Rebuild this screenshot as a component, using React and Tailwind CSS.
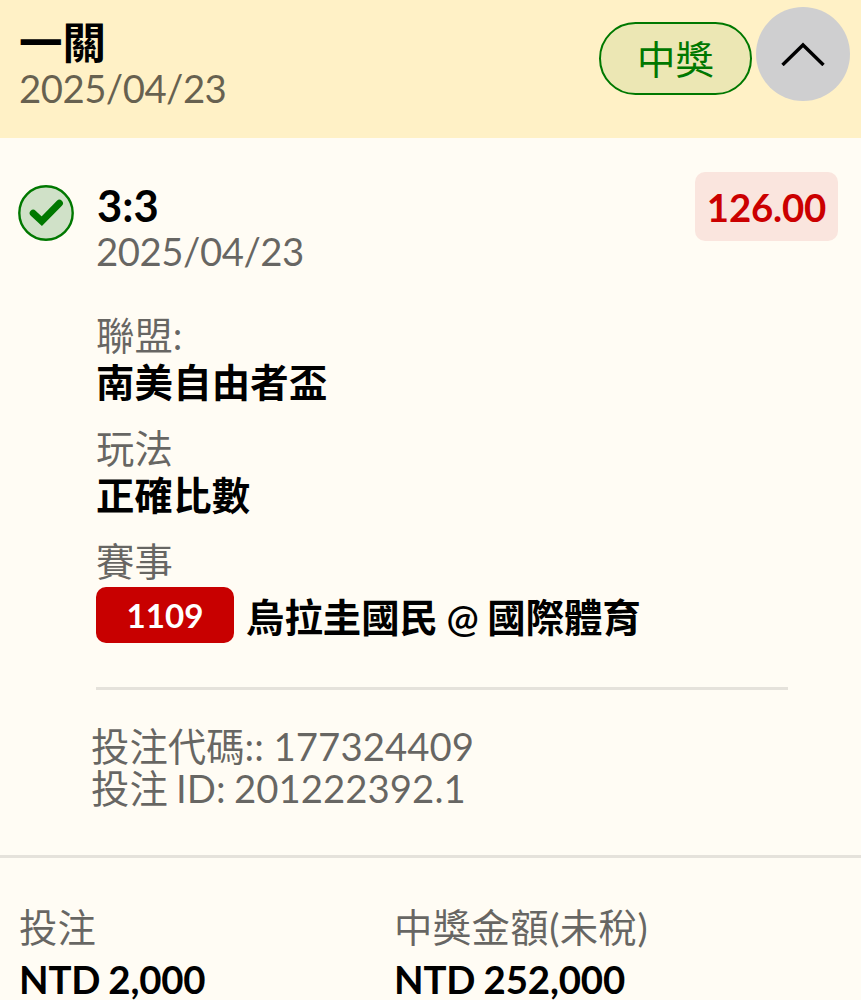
import React from "react";

const details = [
  { label: "聯盟:", value: "南美自由者盃" },
  { label: "玩法", value: "正確比數" },
];

function CheckBadge() {
  return (
    <svg className="block h-14 w-14" viewBox="0 0 56 56" fill="none">
      <circle cx="28" cy="28" r="26.7" fill="#d0e1c8" stroke="#007800" strokeWidth="2.4" />
      <path d="M15.2 28.2L23.8 36.2L41.4 18.2" stroke="#007800" strokeWidth="7" strokeLinecap="round" />
    </svg>
  );
}

function Header() {
  return (
    <header className="flex h-[138px] items-start justify-between bg-[#fff1c6] pl-[19px] pr-[11px]">
      <div className="pt-[19px]">
        <h1 className="text-[43.5px] font-bold leading-[46px]">一關</h1>
        <p className="text-[38.4px] leading-[46px] tracking-[-0.55px] text-black/60">2025/04/23</p>
      </div>
      <div className="flex gap-1 pt-[7px]">
        <span className="mt-[15px] flex h-[73px] w-[153px] items-center justify-center rounded-full border-[2.6px] border-[#007800] bg-[#ece7b4] pt-px text-[38.4px] leading-none text-[#007800]">
          中獎
        </span>
        <button className="flex h-[94px] w-[94px] items-center justify-center rounded-full bg-[#cfcfd0] pb-px">
          <svg className="h-6 w-11" viewBox="0 0 44 24" fill="none">
            <path d="M1.5 23L22 3L42.5 23" stroke="#000" strokeWidth="3.4" />
          </svg>
        </button>
      </div>
    </header>
  );
}

export default function App() {
  return (
    <div className="h-[1000px] w-[861px] overflow-hidden bg-[#fffcf4] font-['Lato','Noto_Sans_CJK_TC',sans-serif] text-black">
      <Header />

      <section className="flex h-[717px] pl-[18px] pr-[23px]">
        <div className="w-[78px] shrink-0 pt-[47px]">
          <CheckBadge />
        </div>

        <div className="flex-1">
          <div className="flex items-start justify-between">
            <div className="pt-11">
              <h2 className="pl-px text-[43.5px] font-bold leading-[46px]">3:3</h2>
              <p className="text-[38.4px] leading-[46px] tracking-[-0.5px] text-black/60">2025/04/23</p>
            </div>
            <span className="mt-[34px] flex h-[69px] w-[143px] items-center justify-center rounded-[10px] bg-[#fae5de] pt-0.5 text-[38.4px] font-bold tracking-[-0.2px] text-[#cb0000]">
              126.00
            </span>
          </div>

          <div className="mt-[38px] text-[38.4px]">
            {details.map((item) => (
              <div key={item.label} className="mb-[19px]">
                <p className="leading-[46px] text-black/60">{item.label}</p>
                <p className="font-bold leading-[48px] tracking-[0.2px]">{item.value}</p>
              </div>
            ))}
            <p className="leading-[46px] text-black/60">賽事</p>
            <div className="mt-[3px] flex items-center gap-3">
              <span className="flex h-14 w-[138px] items-center justify-center rounded-[10px] bg-[#c80000] pt-px text-[33.2px] font-bold text-white">
                1109
              </span>
              <span className="pt-[3px] font-semibold leading-[52px] [word-spacing:-1px]">烏拉圭國民 @ 國際體育</span>
            </div>
          </div>

          <hr className="mr-[50px] mt-11 border-t-[3px] border-black/10" />

          <div className="-ml-[5px] mt-[35px] text-[38.4px] leading-[42px] text-black/60">
            <p>投注代碼:: 177324409</p>
            <p className="[word-spacing:-1.5px]">投注 ID: 201222392.1</p>
          </div>
        </div>
      </section>

      <footer className="flex border-t-[3px] border-black/10 pl-[19px] pt-[43px] text-[38.4px]">
        <div className="w-[375px]">
          <p className="leading-[52px] text-black/60">投注</p>
          <p className="font-bold leading-[53px] tracking-[-0.2px] [word-spacing:-1px]">NTD 2,000</p>
        </div>
        <div>
          <p className="leading-[52px] tracking-[0.4px] text-black/60">中獎金額(未稅)</p>
          <p className="font-bold leading-[53px] tracking-[-0.15px] [word-spacing:-1px]">NTD 252,000</p>
        </div>
      </footer>
    </div>
  );
}
